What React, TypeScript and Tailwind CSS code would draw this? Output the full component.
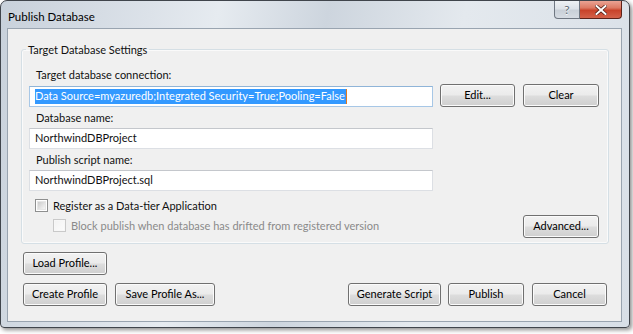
import React from "react";

function Btn({ children, className = "" }: { children: React.ReactNode; className?: string }) {
  return (
    <button
      className={
        "flex h-[23px] items-center justify-center rounded-[3px] border border-[#707070] bg-[linear-gradient(#f2f2f2_0%,#ebebeb_48%,#dddddd_52%,#cfcfcf_100%)] text-[11px] text-black shadow-[inset_0_0_0_1px_#fbfbfb] " +
        className
      }
    >
      {children}
    </button>
  );
}

function TextBox({ children, focused = false }: { children?: React.ReactNode; focused?: boolean }) {
  return (
    <div
      className={
        "flex h-[21px] w-[404px] items-center bg-white pl-[5px] " +
        (focused
          ? "border border-[#a7c7e6] border-t-[#8fb4d8]"
          : "border border-[#dcdfe4] border-t-[#c4c7cc]")
      }
    >
      {children}
    </div>
  );
}

function CheckBox({ disabled = false }: { disabled?: boolean }) {
  return (
    <span
      className={
        "flex h-[13px] w-[13px] shrink-0 items-center justify-center border " +
        (disabled ? "border-[#c9c9c9] bg-[#f7f7f7]" : "border-[#8e8f8f] bg-white")
      }
    >
      <span
        className={
          "h-[9px] w-[9px] " +
          (disabled
            ? "bg-[linear-gradient(135deg,#f3f3f3,#fbfbfb)]"
            : "bg-[linear-gradient(135deg,#cbcbcb,#f6f6f6)] border border-[#e6e6e6]")
        }
      />
    </span>
  );
}

export default function App() {
  return (
    <div className="h-[334px] w-[633px] bg-white font-['Lato',sans-serif] text-[11px] text-[#111]">
      <div className="flex h-[328px] w-[630px] flex-col rounded-t-[7px] rounded-b-[4px] border border-[#40454c] bg-[linear-gradient(100deg,#c8d1db_0%,#dce2e9_22%,#e6ebf0_32%,#cdd5de_48%,#e4e9ee_68%,#d8dfe7_100%)] shadow-[2px_2px_4px_rgba(0,0,0,0.45)]">
        {/* title bar */}
        <div className="flex h-[27px] items-start justify-between">
          <div className="pl-[7px] pt-[8px] text-[11.5px] leading-[16px] text-black">Publish Database</div>
          <div className="mr-[7px] flex">
            <div className="flex h-[18px] w-[26px] items-center justify-center rounded-bl-[4px] border border-t-0 border-[#6f7782] bg-[linear-gradient(#eef1f4_0%,#dde2e8_45%,#c9d0d8_55%,#d6dce3_100%)]">
              <span className="text-[12px] leading-none text-[#606a75] [text-shadow:0_1px_0_#ffffff]">?</span>
            </div>
            <div className="flex h-[18px] w-[42px] items-center justify-center rounded-br-[4px] border border-l-0 border-t-0 border-[#5d2219] bg-[linear-gradient(#eaa394_0%,#dc7a64_40%,#c8432a_55%,#d4624a_100%)]">
              <svg width="12" height="10" viewBox="0 0 12 10">
                <path d="M1.5 1 L10.5 9 M10.5 1 L1.5 9" stroke="#4a1a12" strokeWidth="3.4" strokeLinecap="square" />
                <path d="M1.5 1 L10.5 9 M10.5 1 L1.5 9" stroke="#ffffff" strokeWidth="2" strokeLinecap="square" />
              </svg>
            </div>
          </div>
        </div>

        {/* client area */}
        <div className="mb-[5px] ml-[6px] mr-[7px] flex flex-1 flex-col border border-[#99a4b0] bg-[#f0f0f0] pb-[14px]">
          <fieldset className="ml-[13px] mr-[12px] mt-[13px] rounded-[3px] border border-[#d5dfe5] pb-[5px] pl-[7px] shadow-[inset_0_0_0_1px_#fafafa]">
            <legend className="ml-[-3px] px-[2px] leading-[15px]">Target Database Settings</legend>

            <div className="mt-[10px] pl-[7px] leading-[15px]">Target database connection:</div>
            <div className="mt-[2px] flex items-end">
              <TextBox focused>
                <span className="flex h-[15px] items-center bg-[#3399ff] pr-[1px] text-white">
                  Data Source=myazuredb;Integrated Security=True;Pooling=False
                </span>
                <span className="h-[15px] w-px bg-[#e07a20]" />
              </TextBox>
              <Btn className="ml-[7px] w-[75px]">Edit...</Btn>
              <Btn className="ml-[8px] w-[76px]">Clear</Btn>
            </div>

            <div className="mt-[3px] pl-[7px] leading-[15px]">Database name:</div>
            <div className="mt-[3px]">
              <TextBox>NorthwindDBProject</TextBox>
            </div>

            <div className="mt-[3px] pl-[7px] leading-[15px]">Publish script name:</div>
            <div className="mt-[3px]">
              <TextBox>NorthwindDBProject.sql</TextBox>
            </div>

            <div className="mt-[7px] flex items-center pl-[6px] leading-[15px]">
              <CheckBox />
              <span className="ml-[5px]">Register as a Data-tier Application</span>
            </div>
            <div className="mt-[2px] flex items-start justify-between">
              <div className="mt-[3px] flex items-center pl-[24px] leading-[15px] text-[#8a8a8a]">
                <CheckBox disabled />
                <span className="ml-[5px]">Block publish when database has drifted from registered version</span>
              </div>
              <Btn className="mr-[9px] w-[76px]">Advanced...</Btn>
            </div>
          </fieldset>

          <div className="ml-[15px] mt-[8px]">
            <Btn className="w-[84px]">Load Profile...</Btn>
          </div>
          <div className="ml-[15px] mr-[14px] mt-[8px] flex items-center">
            <Btn className="w-[84px]">Create Profile</Btn>
            <Btn className="ml-[8px] w-[100px]">Save Profile As...</Btn>
            <div className="flex-1" />
            <Btn className="w-[93px]">Generate Script</Btn>
            <Btn className="ml-[7px] w-[76px]">Publish</Btn>
            <Btn className="ml-[8px] w-[75px]">Cancel</Btn>
          </div>
        </div>
      </div>
    </div>
  );
}
